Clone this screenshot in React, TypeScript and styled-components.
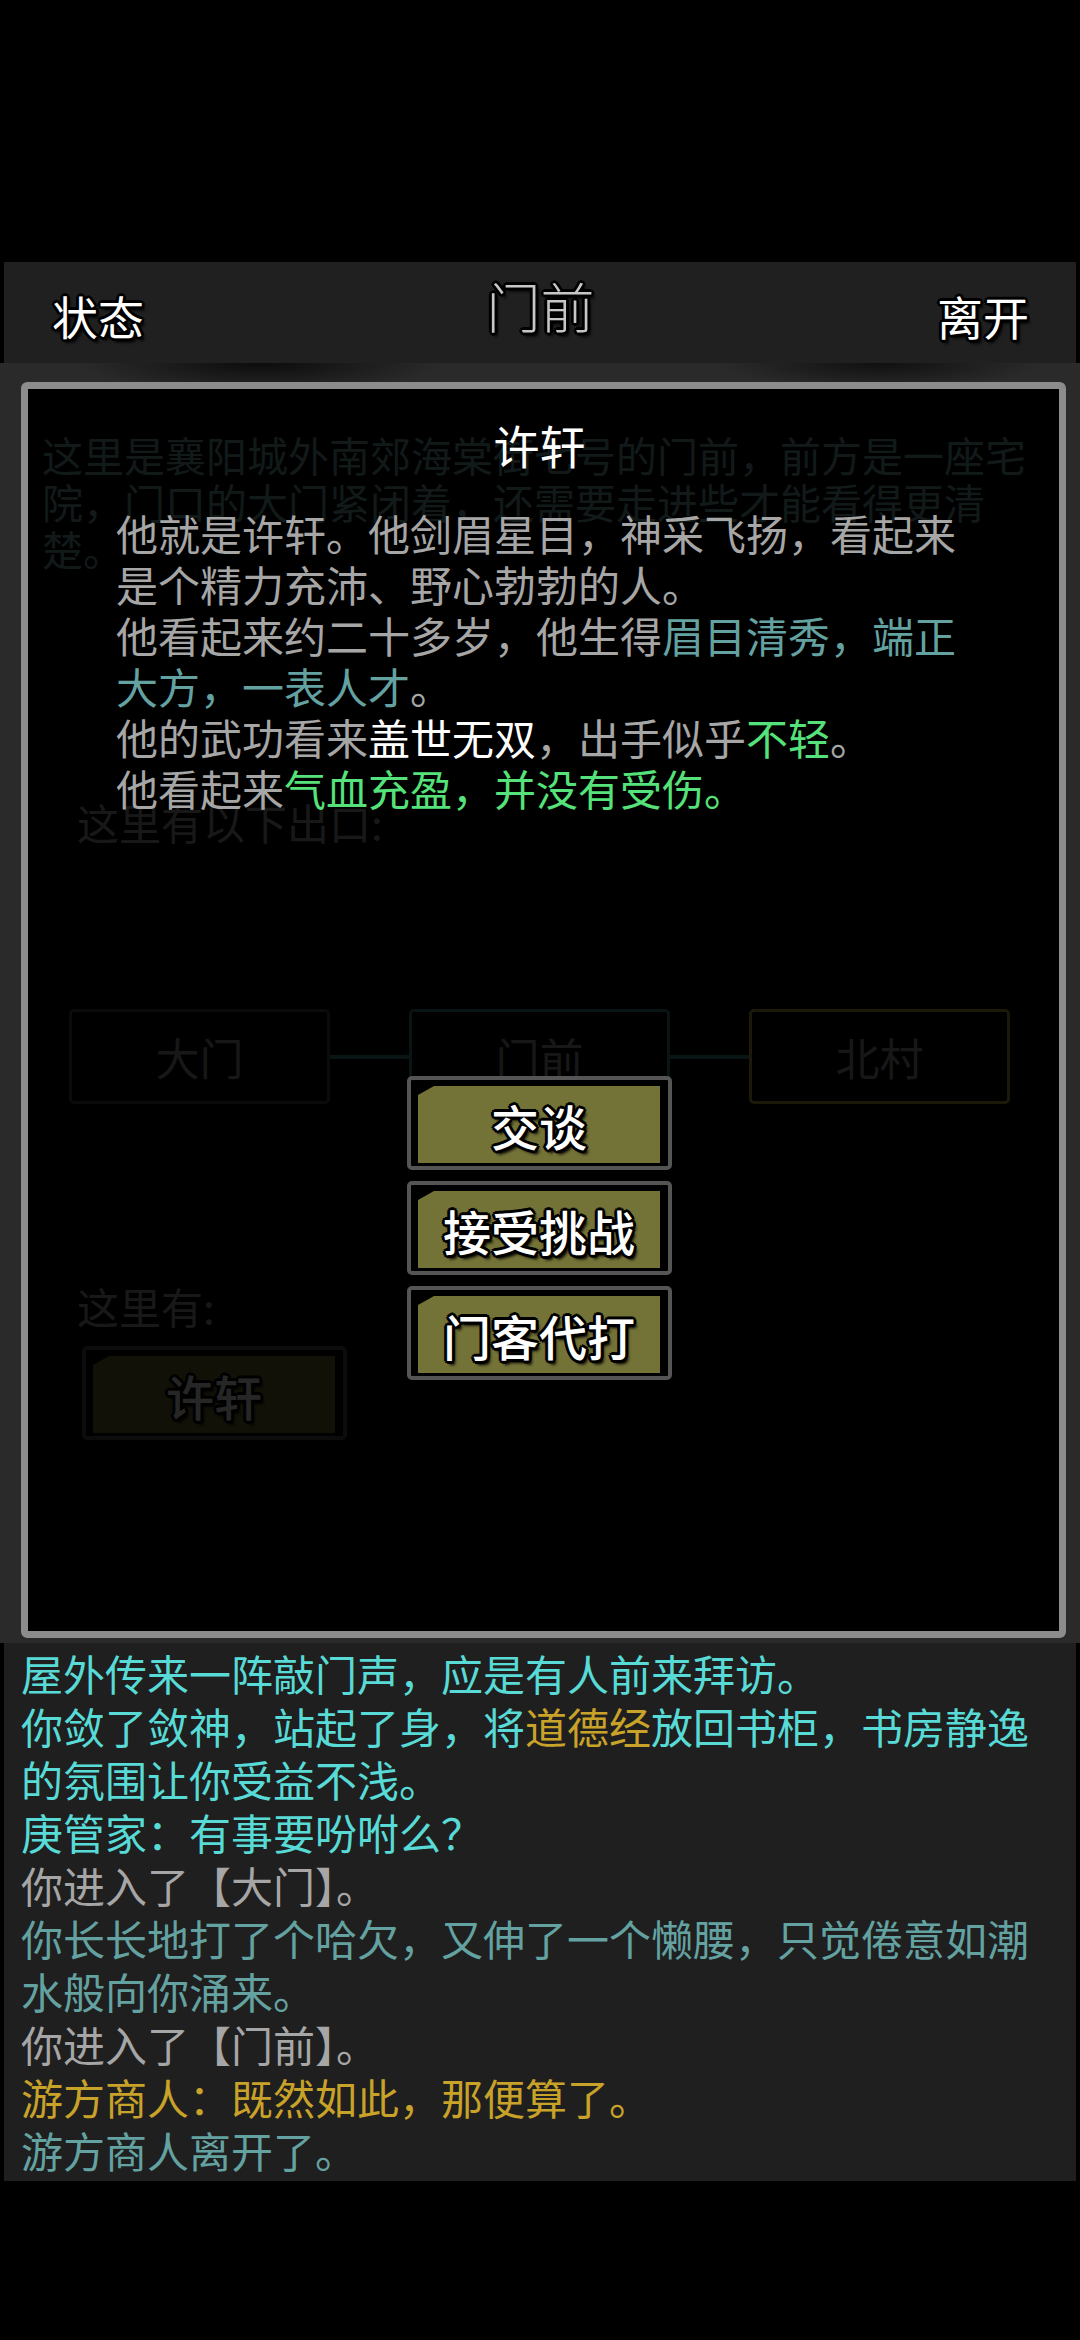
import React from 'react';
import styled, { createGlobalStyle } from 'styled-components';

const GlobalStyle = createGlobalStyle`
  html, body {
    margin: 0;
    padding: 0;
    background: #000;
  }
  body {
    font-family: "Noto Sans CJK SC", "Noto Sans", sans-serif;
  }
`;

const colors: Record<string, string> = {
  gray: '#a6a6a6',
  teal: '#64a2a2',
  cyan: '#58dad6',
  gold: '#c8a229',
  white: '#ffffff',
  green: '#56e27a',
};

const outline = `
  text-shadow:
    2px 2px 0 #000, -2px -2px 0 #000, 2px -2px 0 #000, -2px 2px 0 #000,
    0 3px 0 #000, 3px 0 0 #000, 0 -3px 0 #000, -3px 0 0 #000,
    3px 4px 3px #000;
`;

const Screen = styled.div`
  width: 1080px;
  height: 2340px;
  box-sizing: border-box;
  padding-top: 262px;
  background: #000;
  display: flex;
  flex-direction: column;
`;

const TopBar = styled.header`
  margin: 0 4px;
  height: 101px;
  box-sizing: border-box;
  padding: 0 47px 0 48px;
  background: #202020;
  display: flex;
  align-items: center;
  justify-content: space-between;
`;

const BarItem = styled.span<{ $title?: boolean }>`
  font-size: ${(p) => (p.$title ? '54px' : '46px')};
  font-weight: ${(p) => (p.$title ? 300 : 400)};
  line-height: 1;
  color: ${(p) => (p.$title ? '#c6c6c6' : '#fff')};
  margin-top: ${(p) => (p.$title ? '-14px' : '4px')};
  ${outline}
`;

const Stage = styled.main`
  position: relative;
  height: 1280px;
  box-sizing: border-box;
  padding: 19px 14px 5px 21px;
  background-color: #2a2a2a;
  background-image:
    radial-gradient(ellipse 180px 30px at 260px 0, #0c0c0c 0, transparent 100%),
    radial-gradient(ellipse 160px 26px at 880px 0, #101010 0, transparent 100%);
  overflow: hidden;
`;

const Page = styled.div`
  height: 100%;
  box-sizing: border-box;
  padding: 49px 0 0 21px;
  border-radius: 6px;
  background: #000;
  display: flex;
  flex-direction: column;
`;

const Description = styled.p`
  margin: 0;
  width: 1000px;
  font-size: 41px;
  line-height: 47px;
  color: #74a8a8;
`;

const SectionLabel = styled.div<{ $gap: number }>`
  margin-top: ${(p) => p.$gap}px;
  padding-left: 35px;
  font-size: 42px;
  line-height: 47px;
  color: #a0a0a0;
`;

const MapRow = styled.div`
  margin: 164px 0 0 27px;
  display: flex;
  align-items: center;
`;

const MapBox = styled.div<{ $edge: string }>`
  width: 261px;
  height: 95px;
  box-sizing: border-box;
  border: 3px solid ${(p) => p.$edge};
  border-radius: 5px;
  display: flex;
  align-items: center;
  justify-content: center;
  font-size: 44px;
  color: #9a9a9a;
`;

const Connector = styled.div`
  width: 79px;
  height: 4px;
  background: #3f8f8f;
`;

const GameButton = styled.button<{ $offset?: number }>`
  width: 265px;
  height: 94px;
  box-sizing: border-box;
  margin: 0;
  margin-left: ${(p) => p.$offset ?? 0}px;
  padding: 6px 8px 3px 7px;
  border: 4px solid #555;
  border-radius: 5px;
  background: #000;
  font-family: inherit;
  cursor: pointer;
`;

const Plate = styled.span`
  display: flex;
  align-items: center;
  justify-content: center;
  width: 100%;
  height: 100%;
  background: #737237;
  clip-path: polygon(0 9px, 16px 0, 100% 0, 100% 100%, 0 100%);
  font-size: 48px;
  font-weight: 500;
  line-height: 1;
  color: #fff;
  ${outline}
`;

const Modal = styled.section`
  position: absolute;
  top: 19px;
  left: 21px;
  right: 14px;
  bottom: 5px;
  border: 7px solid #8c8c8c;
  border-radius: 6px;
  background: rgba(0, 0, 0, 0.85);
  display: flex;
  flex-direction: column;
  align-items: center;
`;

const ModalTitle = styled.h2`
  margin: 27px 8px 0 0;
  font-size: 46px;
  font-weight: 400;
  line-height: 56px;
  color: #fff;
`;

const ModalBody = styled.div`
  align-self: stretch;
  margin-top: 35px;
  padding: 0 83px 0 88px;
  font-size: 42px;
  line-height: 51px;
  color: ${colors.gray};
  p {
    margin: 0;
  }
`;

const Actions = styled.div`
  margin: 263px 8px 0 0;
  display: flex;
  flex-direction: column;
  gap: 11px;
`;

const Log = styled.section`
  margin: 0 4px;
  padding: 3px 17px 5px;
  background: #1f1f1f;
  font-size: 42px;
  line-height: 53px;
  p {
    margin: 0;
  }
`;

const Tint = styled.span<{ $c: string }>`
  color: ${(p) => colors[p.$c]};
`;

type Piece = [string, string];

const lookText: Piece[][] = [
  [['gray', '他就是许轩。他剑眉星目，神采飞扬，看起来是个精力充沛、野心勃勃的人。']],
  [['gray', '他看起来约二十多岁，他生得'], ['teal', '眉目清秀，端正大方，一表人才'], ['gray', '。']],
  [['gray', '他的武功看来'], ['white', '盖世无双'], ['gray', '，出手似乎'], ['green', '不轻'], ['gray', '。']],
  [['gray', '他看起来'], ['green', '气血充盈，并没有受伤。']],
];

const logLines: Piece[][] = [
  [['cyan', '屋外传来一阵敲门声，应是有人前来拜访。']],
  [['cyan', '你敛了敛神，站起了身，将'], ['gold', '道德经'], ['cyan', '放回书柜，书房静逸的氛围让你受益不浅。']],
  [['cyan', '庚管家：有事要吩咐么？']],
  [['gray', '你进入了【大门】。']],
  [['teal', '你长长地打了个哈欠，又伸了一个懒腰，只觉倦意如潮水般向你涌来。']],
  [['gray', '你进入了【门前】。']],
  [['gold', '游方商人：既然如此，那便算了。']],
  [['teal', '游方商人离开了。']],
];

const actions = ['交谈', '接受挑战', '门客代打'];

function Line({ pieces }: { pieces: Piece[] }) {
  return (
    <p>
      {pieces.map(([c, text]) => (
        <Tint key={text} $c={c}>{text}</Tint>
      ))}
    </p>
  );
}

export default function App() {
  return (
    <Screen>
      <GlobalStyle />
      <TopBar>
        <BarItem>状态</BarItem>
        <BarItem $title>门前</BarItem>
        <BarItem>离开</BarItem>
      </TopBar>

      <Stage>
        <Page>
          <Description>
            这里是襄阳城外南郊海棠街七号的门前，前方是一座宅院，门口的大门紧闭着，还需要走进些才能看得更清楚。
          </Description>
          <SectionLabel $gap={226}>这里有以下出口:</SectionLabel>
          <MapRow>
            <MapBox $edge="#4a4a4a">大门</MapBox>
            <Connector />
            <MapBox $edge="#3f8f8f">门前</MapBox>
            <Connector />
            <MapBox $edge="#bca83a">北村</MapBox>
          </MapRow>
          <SectionLabel $gap={178}>这里有:</SectionLabel>
          <div style={{ marginTop: 17 }}>
            <GameButton $offset={40}>
              <Plate>许轩</Plate>
            </GameButton>
          </div>
        </Page>

        <Modal>
          <ModalTitle>许轩</ModalTitle>
          <ModalBody>
            {lookText.map((pieces, i) => (
              <Line key={i} pieces={pieces} />
            ))}
          </ModalBody>
          <Actions>
            {actions.map((label) => (
              <GameButton key={label}>
                <Plate>{label}</Plate>
              </GameButton>
            ))}
          </Actions>
        </Modal>
      </Stage>

      <Log>
        {logLines.map((pieces, i) => (
          <Line key={i} pieces={pieces} />
        ))}
      </Log>
    </Screen>
  );
}
